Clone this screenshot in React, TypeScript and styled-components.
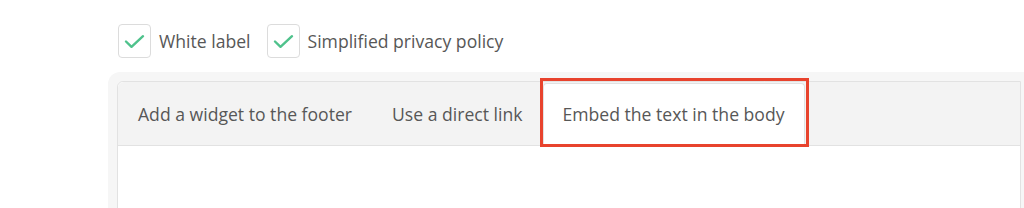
import React, { useState } from 'react';
import styled, { createGlobalStyle } from 'styled-components';

const tabs = ['Add a widget to the footer', 'Use a direct link', 'Embed the text in the body'];

const CheckIcon = () => (
    <svg width="21" height="15" viewBox="0 0 21 15" fill="none">
        <path d="M2 7.5 L7.5 12.8 L19 2.2" stroke="#4fc28c" strokeWidth="2.4" strokeLinecap="round" strokeLinejoin="round" />
    </svg>
);

const App = () => {
    const [activeTab, setActiveTab] = useState(2);

    return (
        <Page>
            <GlobalStyle />
            <Options>
                <Option>
                    <Box><CheckIcon /></Box>
                    <Label>White label</Label>
                </Option>
                <Option>
                    <Box><CheckIcon /></Box>
                    <Label>Simplified privacy policy</Label>
                </Option>
            </Options>
            <Frame>
                <Panel>
                    <TabBar>
                        {tabs.map((t, i) => (
                            <Tab key={t} active={i === activeTab} onClick={() => setActiveTab(i)}>
                                {t}
                                {i === activeTab && <Highlight />}
                            </Tab>
                        ))}
                    </TabBar>
                    <Content />
                </Panel>
            </Frame>
        </Page>
    );
};

export default App;

// Styled Components
const GlobalStyle = createGlobalStyle`
    body {
        margin: 0;
        background: #fff;
        font-family: "Open Sans", Lato, sans-serif;
        overflow: hidden;
    }
`;

const Page = styled.div`
    width: 1024px;
    height: 208px;
    overflow: hidden;
    padding-top: 24px;
    box-sizing: border-box;
`;

const Options = styled.div`
    display: flex;
    gap: 16px;
    padding-left: 118px;
`;

const Option = styled.label`
    display: flex;
    align-items: center;
    gap: 8px;
    cursor: pointer;
`;

const Box = styled.span`
    width: 31px;
    height: 32px;
    border: 1px solid #dcdcdc;
    border-radius: 4px;
    background: #fff;
    display: flex;
    align-items: center;
    justify-content: center;
`;

const Label = styled.span`
    font-size: 17.6px;
    color: #575757;
`;

const Frame = styled.div`
    margin: 14px 0 0 108px;
    padding: 9px 6px 0 9px;
    background: #f6f6f6;
    border-radius: 12px 0 0 0;
    width: 904px;
`;

const Panel = styled.div`
    background: #fff;
    border: 1px solid #e2e2e2;
    border-radius: 6px 0 0 0;
    height: 140px;
`;

const TabBar = styled.div`
    display: flex;
    height: 63px;
    background: #f3f3f3;
    border-bottom: 1px solid #e2e2e2;
    border-radius: 6px 0 0 0;
`;

const Tab = styled.div<{ active?: boolean }>`
    position: relative;
    display: flex;
    align-items: center;
    padding: 0 19px 3px;
    margin-top: 1px;
    margin-bottom: -1px;
    font-size: 17.6px;
    color: #575757;
    cursor: pointer;
    background: ${({ active }) => (active ? '#fff' : 'transparent')};
    border: 1px solid ${({ active }) => (active ? '#e2e2e2' : 'transparent')};
    border-bottom: none;
    border-radius: 4px 4px 0 0;
`;

const Highlight = styled.span`
    position: absolute;
    left: -4px;
    right: -5px;
    top: -6px;
    bottom: -1px;
    border: 3px solid #e8432d;
    pointer-events: none;
`;

const Content = styled.div`
    background: #fff;
`;
